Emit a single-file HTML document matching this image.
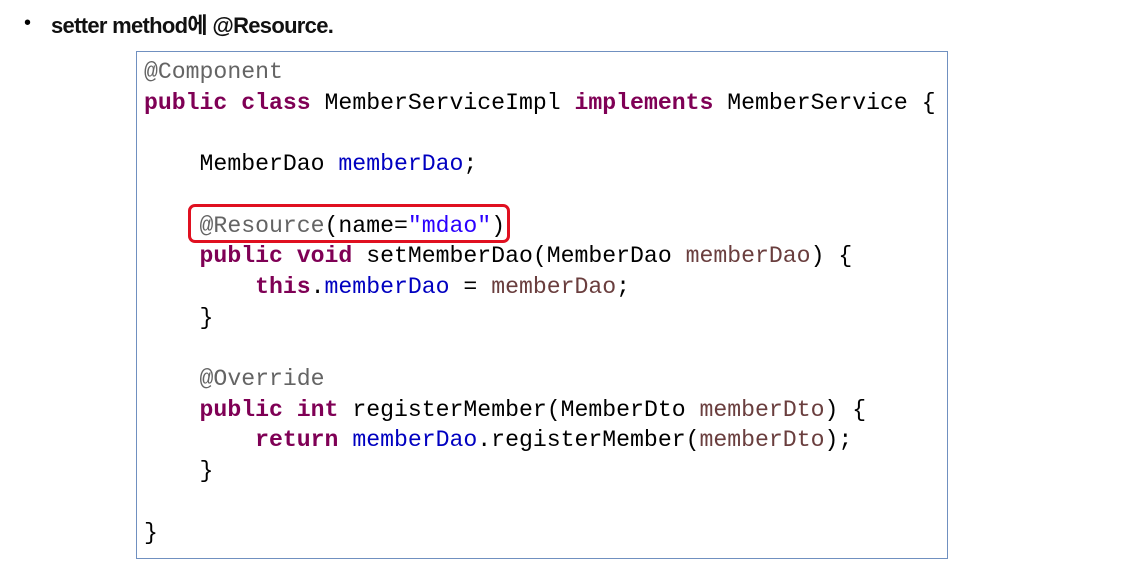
<!DOCTYPE html>
<html><head><meta charset="utf-8"><style>
body{margin:0;width:1125px;height:565px;background:#fff;position:relative;overflow:hidden}
.t{position:absolute;left:51px;top:8px;font:bold 22px "Liberation Sans","Noto Sans CJK KR",sans-serif;letter-spacing:-0.7px;color:#111;white-space:nowrap}
.b{position:absolute;left:24px;top:12px;font:20px "Liberation Sans",sans-serif}
.box{position:absolute;left:136px;top:51px;width:812px;height:508px;border:1px solid #7090c0;box-sizing:border-box}
pre{position:absolute;left:144px;top:57px;margin:0;font:23.15px/30.7px "Liberation Mono","DejaVu Sans Mono",monospace;color:#000}
.k{color:#7f0055;font-weight:bold}.f{color:#0000c0}.p{color:#6a3e3e}.a{color:#646464}.s{color:#2a00ff}
.r{position:absolute;left:188px;top:204px;width:322px;height:39px;border:3px solid #e01020;border-radius:7px;box-sizing:border-box}
</style></head><body>
<div class="b">•</div>
<div class="t">setter method에 @Resource.</div>
<div class="box"></div>
<pre><span class="a">@Component</span>
<span class="k">public</span> <span class="k">class</span> MemberServiceImpl <span class="k">implements</span> MemberService {

    MemberDao <span class="f">memberDao</span>;

    <span class="a">@Resource</span>(name=<span class="s">"mdao"</span>)
    <span class="k">public</span> <span class="k">void</span> setMemberDao(MemberDao <span class="p">memberDao</span>) {
        <span class="k">this</span>.<span class="f">memberDao</span> = <span class="p">memberDao</span>;
    }

    <span class="a">@Override</span>
    <span class="k">public</span> <span class="k">int</span> registerMember(MemberDto <span class="p">memberDto</span>) {
        <span class="k">return</span> <span class="f">memberDao</span>.registerMember(<span class="p">memberDto</span>);
    }

}</pre>
<div class="r"></div>
</body></html>
